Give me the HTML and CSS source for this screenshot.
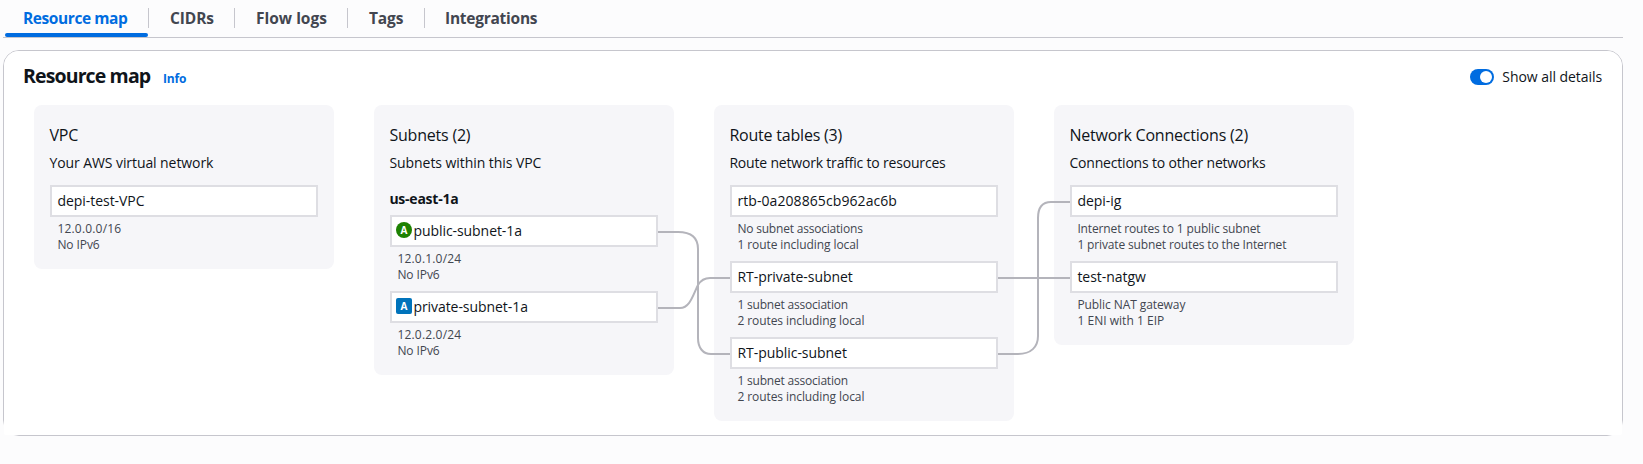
FILE: index.html
```html
<!DOCTYPE html>
<html lang="en">
<head>
<meta charset="utf-8">
<title>Resource map</title>
<link rel="stylesheet" href="styles.css">
</head>
<body>
<main class="page">
  <nav class="tabs">
    <a class="tab tab-active">Resource map</a>
    <a class="tab tab-cidrs">CIDRs</a>
    <a class="tab tab-flow">Flow logs</a>
    <a class="tab tab-tags">Tags</a>
    <a class="tab tab-integrations">Integrations</a>
  </nav>

  <section class="container">
    <div class="surface">
      <header class="header">
        <h2 class="title">Resource map</h2>
        <a class="info">Info</a>
        <label class="toggle"><span class="switch"></span><span>Show all details</span></label>
      </header>

      <div class="map">
        <section class="column">
          <h3 class="column-title">VPC</h3>
          <p class="column-text column-text-vpc">Your AWS virtual network</p>
          <div class="items">
            <div class="item">
              <div class="node">depi-test-VPC</div>
              <div class="details"><p class="numeric">12.0.0.0/16</p><p>No IPv6</p></div>
            </div>
          </div>
        </section>

        <section class="column">
          <h3 class="column-title">Subnets (2)</h3>
          <p class="column-text column-text-loose">Subnets within this VPC</p>
          <h4 class="zone">us-east-1a</h4>
          <div class="items">
            <div class="item">
              <div class="node node-badged"><span class="badge badge-public">A</span>public-subnet-1a</div>
              <div class="details"><p class="numeric">12.0.1.0/24</p><p>No IPv6</p></div>
            </div>
            <div class="item">
              <div class="node node-badged"><span class="badge badge-private">A</span>private-subnet-1a</div>
              <div class="details"><p class="numeric">12.0.2.0/24</p><p>No IPv6</p></div>
            </div>
          </div>
        </section>

        <section class="column">
          <h3 class="column-title">Route tables (3)</h3>
          <p class="column-text">Route network traffic to resources</p>
          <div class="items">
            <div class="item">
              <div class="node node-id">rtb-0a208865cb962ac6b</div>
              <div class="details"><p class="tight">No subnet associations</p><p>1 route including local</p></div>
            </div>
            <div class="item">
              <div class="node">RT-private-subnet</div>
              <div class="details"><p class="tight">1 subnet association</p><p>2 routes including local</p></div>
            </div>
            <div class="item">
              <div class="node">RT-public-subnet</div>
              <div class="details"><p class="tight">1 subnet association</p><p>2 routes including local</p></div>
            </div>
          </div>
        </section>

        <section class="column">
          <h3 class="column-title">Network Connections (2)</h3>
          <p class="column-text">Connections to other networks</p>
          <div class="items">
            <div class="item">
              <div class="node">depi-ig</div>
              <div class="details"><p class="medium">Internet routes to 1 public subnet</p><p class="medium">1 private subnet routes to the Internet</p></div>
            </div>
            <div class="item">
              <div class="node">test-natgw</div>
              <div class="details"><p>Public NAT gateway</p><p class="loose">1 ENI with 1 EIP</p></div>
            </div>
          </div>
        </section>

        <svg class="links" width="1320" height="316" viewBox="34 105 1320 316" fill="none">
          <path d="M658 232H678C691 232 698 238 698 249V338C698 348 703 354 711 354H730"/>
          <path d="M658 308H680C690 308 693 295 698 285C701 280 704 278 710 278H730"/>
          <path d="M998 278H1070"/>
          <path d="M998 354H1018C1031 354 1038 347 1038 336V218C1038 208 1042 202 1051 202H1070"/>
        </svg>
      </div>
    </div>
  </section>
</main>
</body>
</html>
```
FILE: styles.css
```css
* { box-sizing: border-box; }

body {
  margin: 0;
  background: #fcfcfd;
  color: #0f141a;
  font-family: "Open Sans", "Noto Sans", sans-serif;
  font-size: 14px;
}

h2, h3, h4, p { margin: 0; font-weight: 400; }

.page { width: 1620px; margin-left: 3px; }

.tabs {
  display: flex;
  height: 38px;
  padding: 8px 0 0 2px;
  border-bottom: 1px solid #c6c6cd;
}

.tab {
  height: 20px;
  padding-left: 21px;
  border-right: 1px solid #c6c6cd;
  color: #424650;
  font-size: 15.5px;
  font-weight: 700;
  line-height: 21px;
  white-space: nowrap;
}

.tab-active {
  position: relative;
  width: 144px;
  padding-left: 18px;
  color: #006ce0;
  letter-spacing: -0.42px;
}

.tab-active::after {
  content: "";
  position: absolute;
  left: 0;
  top: 25px;
  width: 143px;
  height: 4px;
  border-radius: 2px;
  background: #006ce0;
}

.tab-cidrs { width: 86px; letter-spacing: -0.1px; }
.tab-flow { width: 113px; letter-spacing: 0; }
.tab-tags { width: 77px; letter-spacing: -0.15px; }
.tab-integrations { border-right: 0; letter-spacing: -0.25px; padding-left: 20px; }

.container {
  height: 386px;
  margin-top: 12px;
  border: 1px solid #c6c6cd;
  border-radius: 16px;
}

/* Square lower corners cover the rounded border underneath. */
.surface {
  height: 384px;
  padding: 12px 20px 0;
  border-radius: 15px 15px 2px 2px;
  background: #fff;
}

.header { display: flex; height: 42px; }

.title {
  width: 139px;
  margin-left: -1px;
  margin-right: 1px;
  font-size: 19.5px;
  font-weight: 700;
  line-height: 26px;
  letter-spacing: -0.87px;
  white-space: nowrap;
}

.info {
  padding-top: 7px;
  color: #006ce0;
  font-size: 12px;
  font-weight: 700;
  line-height: 18px;
  letter-spacing: -0.2px;
}

.toggle {
  display: flex;
  gap: 8px;
  height: 16px;
  margin: 6px 0 0 auto;
  line-height: 16px;
  letter-spacing: -0.06px;
}

.switch {
  display: flex;
  justify-content: flex-end;
  width: 24px;
  height: 16px;
  padding: 2px;
  border-radius: 8px;
  background: #006ce0;
}

.switch::after {
  content: "";
  width: 12px;
  height: 12px;
  border-radius: 50%;
  background: #fff;
}

.map {
  position: relative;
  display: flex;
  align-items: flex-start;
  gap: 40px;
  padding-left: 10px;
}

.column {
  width: 300px;
  padding: 19px 16px 16px;
  border-radius: 8px;
  background: #f6f6f9;
}

.column-title {
  margin-left: -0.6px;
  font-size: 16px;
  line-height: 22px;
  letter-spacing: -0.21px;
}

.column-text {
  margin: 7px 0 0 -0.6px;
  line-height: 20px;
  letter-spacing: -0.19px;
  white-space: nowrap;
}

.column-text-vpc { letter-spacing: -0.08px; }
.column-text-loose { letter-spacing: -0.06px; }

.zone {
  margin: 16px 0 -6px -0.6px;
  font-size: 14px;
  font-weight: 700;
  line-height: 20px;
  letter-spacing: -0.24px;
}

.items {
  display: flex;
  flex-direction: column;
  gap: 8px;
  margin-top: 12px;
}

.node {
  display: flex;
  align-items: center;
  width: 268px;
  height: 32px;
  padding: 0 5.4px 1px;
  border: 2px solid #dedee3;
  background: #fff;
  letter-spacing: -0.04px;
}

.node-id { letter-spacing: 0.08px; }
.node-badged { padding-left: 4px; gap: 1.4px; letter-spacing: -0.06px; }

.badge {
  width: 16px;
  height: 16px;
  margin-bottom: 1px;
  color: #fff;
  font-size: 10px;
  font-weight: 700;
  line-height: 16px;
  text-align: center;
}

.badge-public { border-radius: 50%; background: #1d8102; }
.badge-private { border-radius: 2px; background: #0073bb; }

.details {
  padding: 4px 8px 0 7.4px;
  color: #424650;
  font-size: 12px;
  line-height: 16px;
  letter-spacing: -0.08px;
  white-space: nowrap;
}

.numeric { letter-spacing: 0.19px; }
.tight { letter-spacing: -0.2px; }
.medium { letter-spacing: -0.14px; }
.loose { letter-spacing: 0.03px; }

.links {
  position: absolute;
  left: 10px;
  top: 0;
  stroke: #b4b4bb;
  stroke-width: 2;
}
```
